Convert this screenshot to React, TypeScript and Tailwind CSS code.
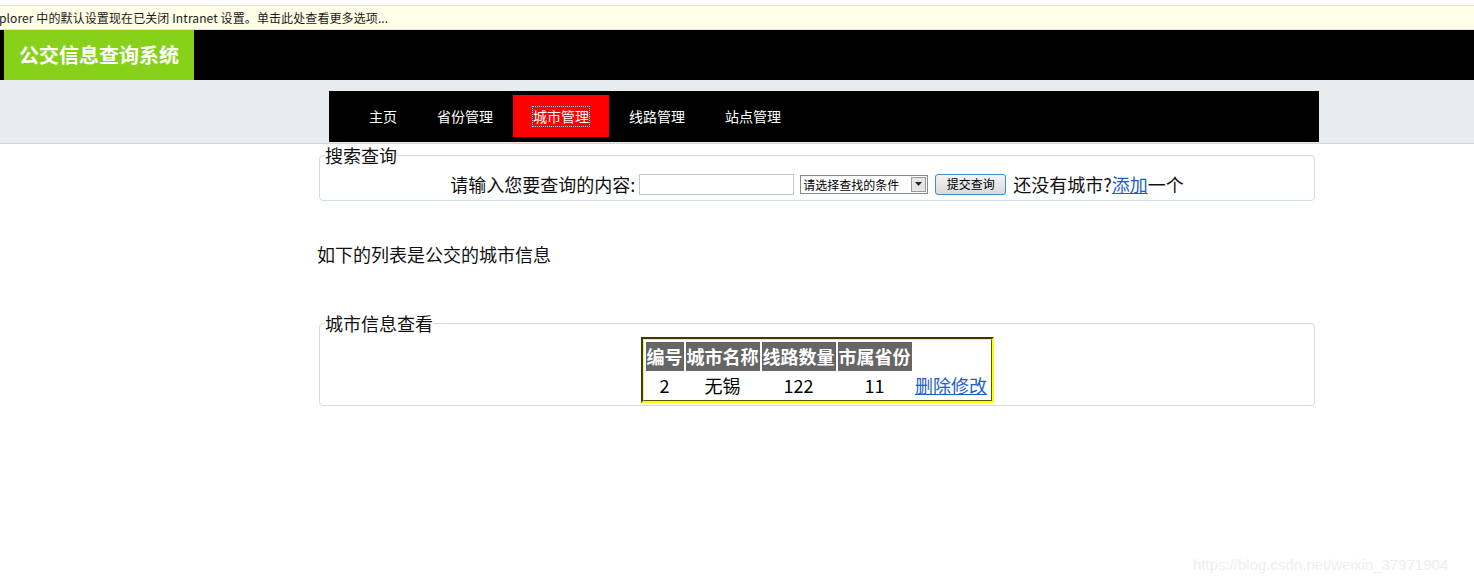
import React from "react"

const CJK = { fontFamily: '"Noto Sans CJK SC", "Noto Sans", sans-serif' }

const NAV = ["主页", "省份管理", "城市管理", "线路管理", "站点管理"]

function Fieldset({ legend, children }: { legend: string; children: React.ReactNode }) {
  return (
    <fieldset className="ml-[319px] w-[996px] border border-[#d3dde6] rounded-[4px] px-[5px]">
      <legend className="text-[18px] leading-[20px] text-[#111]">{legend}</legend>
      {children}
    </fieldset>
  )
}

export default function App() {
  return (
    <div className="relative min-h-[581px] bg-white text-black" style={CJK}>
      {/* ie info bar */}
      <div className="h-[5px] bg-white" />
      <div className="h-[25px] bg-[#fffee6] border-t border-b border-[#e2e2d8] flex items-center overflow-hidden">
        <span className="ml-[-1px] text-[12px] tracking-[0.1px] text-[#1a1a1a] whitespace-nowrap">
          plorer 中的默认设置现在已关闭 Intranet 设置。单击此处查看更多选项...
        </span>
      </div>

      {/* header */}
      <div className="h-[50px] bg-black flex">
        <div className="ml-[4px] w-[190px] bg-[#87d11a] flex items-center justify-center text-white text-[20px] font-bold">
          公交信息查询系统
        </div>
      </div>

      {/* nav band */}
      <div className="h-[64px] bg-[#e8ecef] border-b border-[#d0d5d8] pt-[11px]">
        <div className="ml-[329px] w-[990px] h-[51px] bg-black pt-[4px] pl-[20px] flex">
          {NAV.map(n => (
            <div
              key={n}
              className={`h-[42px] px-[20px] flex items-center text-white text-[14px] ${n === "城市管理" ? "bg-[#ff0000]" : ""}`}
            >
              <span className={n === "城市管理" ? "outline-1 outline-dotted outline-[#6fe0ff] leading-[19px]" : ""}>{n}</span>
            </div>
          ))}
        </div>
      </div>

      {/* search */}
      <div className="mt-[1px]">
        <Fieldset legend="搜索查询">
          <div className="h-[24px] mt-[7px] mb-[4px] flex items-center justify-center text-[18px] text-[#111] whitespace-nowrap">
            <span>请输入您要查询的内容:</span>
            <div className="ml-[4px] w-[155px] h-[21px] border border-[#c6c6c6] bg-white" />
            <div className="ml-[6px] w-[128px] h-[19px] border border-[#8a8a8a] bg-white flex items-center text-[12px] text-black">
              <span className="flex-1 pl-[2px] leading-[17px]">请选择查找的条件</span>
              <div className="w-[15px] h-[15px] mr-[1px] border border-[#9a9a9a] bg-[#e6e6e6] flex items-center justify-center">
                <svg width="7" height="4" viewBox="0 0 7 4"><path d="M0 0h7L3.5 4z" fill="#222" /></svg>
              </div>
            </div>
            <div className="ml-[7px] w-[71px] h-[21px] rounded-[3px] border border-[#3c8ec9] bg-gradient-to-b from-[#f4f4f4] to-[#d9d9d9] flex items-center justify-center text-[12px] text-black">
              提交查询
            </div>
            <span className="ml-[7px]">还没有城市?</span>
            <a className="text-[#1c5ec9] underline">添加</a>
            <span>一个</span>
          </div>
        </Fieldset>
      </div>

      <div className="mt-[41px] ml-[317px] text-[18px] leading-[24px] text-[#111]">如下的列表是公交的城市信息</div>

      {/* city table */}
      <div className="mt-[47px]">
        <Fieldset legend="城市信息查看">
          <div className="mt-[4px] mb-[2px] flex justify-center">
            <div className="border-2 border-t-[#3a3a00] border-l-[#3a3a00] border-r-[#ffff00] border-b-[#ffff00]">
              <div className="border border-t-[#ffff00] border-l-[#ffff00] border-r-[#5a5a00] border-b-[#5a5a00]">
                <table className="border-separate border-spacing-[2px] text-[18px]">
                  <tbody>
                    <tr className="h-[29px]">
                      {["编号", "城市名称", "线路数量", "市属省份"].map(h => (
                        <th key={h} className="bg-[#666666] text-white font-bold px-[1px] leading-[27px]">{h}</th>
                      ))}
                      <td className="w-[75px]" />
                    </tr>
                    <tr className="h-[25px]">
                      <td className="text-center leading-[22px] pb-[2px]">2</td>
                      <td className="text-center leading-[22px] pb-[2px]">无锡</td>
                      <td className="text-center leading-[22px] pb-[2px]">122</td>
                      <td className="text-center leading-[22px] pb-[2px]">11</td>
                      <td className="text-center leading-[22px] pb-[2px]">
                        <a className="text-[#1c5ec9] underline">删除修改</a>
                      </td>
                    </tr>
                  </tbody>
                </table>
              </div>
            </div>
          </div>
        </Fieldset>
      </div>

      <div
        className="absolute left-[1193px] top-[554px] text-[15px] text-[#eeeeee] whitespace-nowrap"
        style={{ fontFamily: '"Liberation Sans", Arial, sans-serif' }}
      >
        https://blog.csdn.net/weixin_37971904
      </div>
    </div>
  )
}
